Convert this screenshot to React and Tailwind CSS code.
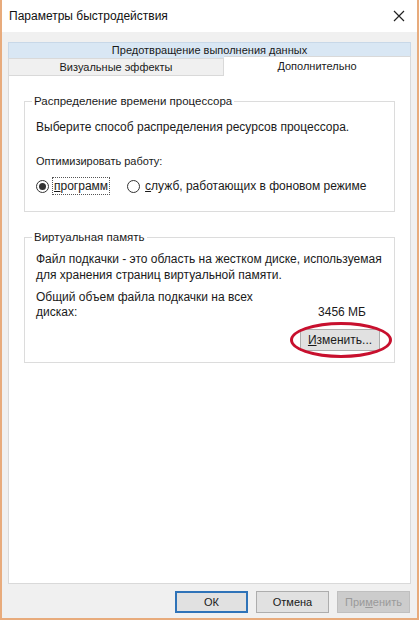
import React from 'react';

const font = { fontFamily: '"Liberation Sans", Arial, sans-serif' };

const Radio = ({ checked, label, accel, focused }) => (
  <label className="flex items-center gap-[4px]">
    <span className="w-[13px] h-[13px] rounded-full border border-[#333] bg-white flex items-center justify-center">
      {checked && <span className="w-[7px] h-[7px] rounded-full bg-[#333]" />}
    </span>
    <span className={focused ? 'outline outline-1 outline-dotted outline-[#555] px-[1px]' : 'px-[1px]'}>
      <span className="underline">{accel}</span>
      {label}
    </span>
  </label>
);

const GroupBox = ({ title, className, children }) => (
  <div className={`relative border border-[#dcdcdc] ${className}`}>
    <div className="absolute -top-[9px] left-[7px] bg-white px-[2px] leading-[16px] text-[11.5px]">{title}</div>
    {children}
  </div>
);

export default function App() {
  return (
    <div
      className="w-[419px] h-[620px] flex flex-col border-l-2 border-r-2 border-b-2 border-[#e8ab7c] bg-[#f0f0f0] text-[12px] text-[#1a1a1a] overflow-hidden"
      style={font}
    >
      {/* Title bar */}
      <div className="h-[32px] bg-white flex items-center justify-between pl-[7px] pr-[12px] shrink-0">
        <span className="text-[12px] text-[#111]">Параметры быстродействия</span>
        <svg width="12" height="12" viewBox="0 0 12 12">
          <path d="M1 1L11 11M11 1L1 11" stroke="#222" strokeWidth="1.2" />
        </svg>
      </div>

      <div className="flex-1 px-[6px] pt-[10px] flex flex-col">
        {/* Tabs */}
        <div className="h-[16px] bg-[#d9e7f4] border border-[#c8d8e8] border-b-0 flex items-center justify-center leading-none text-[11px]">
          Предотвращение выполнения данных
        </div>
        <div className="flex h-[18px] text-[11px]">
          <div className="w-[216px] bg-[#f0f0f0] border border-[#d9d9d9] flex items-center justify-center leading-none">
            Визуальные эффекты
          </div>
          <div className="flex-1 bg-white border-t border-r border-[#d9d9d9] -mt-[2px] h-[20px] flex items-center justify-center leading-none">
            Дополнительно
          </div>
        </div>

        {/* Panel */}
        <div className="h-[508px] bg-white border border-t-0 border-[#d9d9d9] px-[15px] pt-[25px]">
          <GroupBox title="Распределение времени процессора" className="h-[111px] pl-[11px] pt-[16px]">
            <div className="leading-[18px] whitespace-nowrap">Выберите способ распределения ресурсов процессора.</div>
            <div className="leading-[18px] mt-[16px] text-[11px]">Оптимизировать работу:</div>
            <div className="flex items-center gap-[18px] mt-[8px] leading-[16px]">
              <Radio checked accel="п" label="рограмм" focused />
              <Radio accel="с" label="лужб, работающих в фоновом режиме" />
            </div>
          </GroupBox>

          <GroupBox title="Виртуальная память" className="h-[126px] mt-[25px] pl-[11px] pr-[14px] pt-[13px]">
            <div className="leading-[16px] whitespace-nowrap">
              Файл подкачки - это область на жестком диске, используемая
              <br />
              для хранения страниц виртуальной памяти.
            </div>
            <div className="flex justify-between items-end mt-[7px] leading-[15px]">
              <div>
                Общий объем файла подкачки на всех
                <br />
                дисках:
              </div>
              <div className="pr-[14px]">3456 МБ</div>
            </div>
            <div className="flex justify-end mt-[9px]">
              <div className="relative">
                <button className="w-[80px] h-[22px] bg-[#e1e1e1] border border-[#adadad] leading-none">
                  <span className="underline">И</span>зменить...
                </button>
                <div className="absolute -left-[10px] -top-[7px] w-[102px] h-[36px] rounded-[50%] border-[3px] border-[#c8102e] pointer-events-none" />
              </div>
            </div>
          </GroupBox>
        </div>

        {/* Buttons */}
        <div className="flex justify-end gap-[8px] mt-[7px] pr-[1px] text-[11px]">
          <button className="w-[73px] h-[22px] bg-[#e1e1e1] border-2 border-[#2f73b8] leading-none">ОК</button>
          <button className="w-[73px] h-[22px] bg-[#e1e1e1] border border-[#adadad] leading-none">Отмена</button>
          <button className="w-[73px] h-[22px] bg-[#cccccc] border border-[#bfbfbf] text-[#9a9a9a] leading-none">
            При<span className="underline">м</span>енить
          </button>
        </div>
      </div>
    </div>
  );
}
